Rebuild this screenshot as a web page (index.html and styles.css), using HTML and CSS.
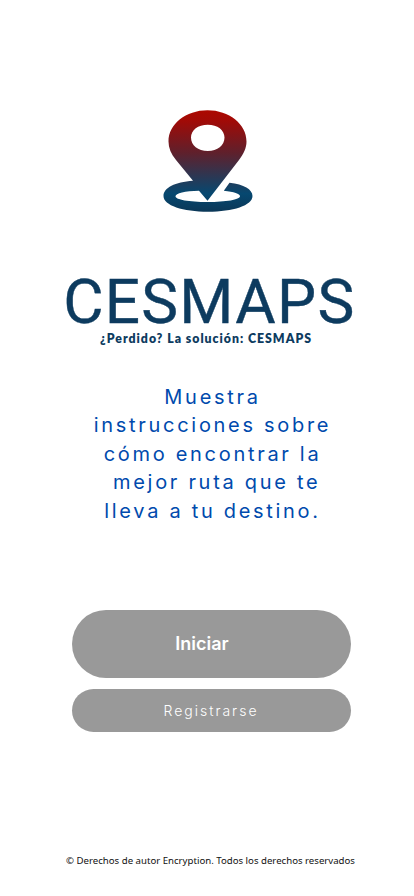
FILE: index.html
```html
<!DOCTYPE html>
<html lang="es">
<head>
<meta charset="utf-8">
<meta name="viewport" content="width=device-width, initial-scale=1">
<title>CESMAPS</title>
<link rel="stylesheet" href="styles.css">
</head>
<body>
<main class="screen">
  <svg class="pin" viewBox="0 0 90 102" aria-hidden="true">
    <defs>
      <linearGradient id="pinFill" gradientUnits="userSpaceOnUse" x1="0" y1="0" x2="0" y2="102">
        <stop offset="0" stop-color="#ac0800"/>
        <stop offset=".1" stop-color="#a20a06"/>
        <stop offset=".42" stop-color="#5f202c"/>
        <stop offset=".82" stop-color="#064870"/>
        <stop offset="1" stop-color="#0b3757"/>
      </linearGradient>
    </defs>
    <path fill="url(#pinFill)" fill-rule="evenodd" d="M44.5 .3C66 .3 83.5 14 83.5 31.5C83.5 38 80.500 44 76 50L44.500 90.700L36 80.700C22 81 12.500 83 12.500 86.500C12.500 89.500 26 92 44.500 92C63 92 77 89.500 77 86.200C77 84 71 81.800 60.800 80.800L66.500 72.800C81 74.500 89.500 79.500 89.500 86C89.500 95.500 70 101.700 45 101.700C20 101.700 .5 95.500 .5 86C.5 78 12 72 30 70.800L13 50C8 44 5.500 38 5.500 31.500C5.500 14 23 .3 44.500 .3ZM44.800 14.700C35 14.700 28 20 28 27.600C28 35.500 35 41 44.800 41C54.500 41 61.500 35.500 61.500 27.600C61.500 20 54.500 14.700 44.800 14.700Z"/>
  </svg>
  <svg class="brand" viewBox="0 0 300 76">
    <text class="brand-name" x="4.200" y="51.500" textLength="291">CESMAPS</text>
    <text class="brand-tag" x="41" y="71.500" textLength="211">¿Perdido? La solución: CESMAPS</text>
  </svg>
  <p class="intro">Muestra
instrucciones sobre
cómo encontrar la
 mejor ruta que te
lleva a tu destino.</p>
  <div class="actions">
    <button class="button start" type="button">Iniciar</button>
    <button class="button register" type="button">Registrarse</button>
  </div>
  <footer class="copyright">© Derechos de autor Encryption. Todos los derechos reservados</footer>
</main>
</body>
</html>
```
FILE: styles.css
```css
* { box-sizing: border-box; }
body { margin: 0; background: #fff; }
.screen {
  width: 414px;
  height: 896px;
  display: flex;
  flex-direction: column;
  align-items: center;
  padding-top: 110px;
  overflow: hidden;
}
.pin { width: 90px; height: 102px; flex: none; margin-left: 1px; }
.brand {
  width: 300px;
  height: 76px;
  flex: none;
  margin: 59px 0 0 4px;
  fill: #0d3b5f;
  overflow: visible;
}
.brand-name {
  font: 400 62px Roboto, sans-serif;
  stroke: #0d3b5f;
  stroke-width: .4px;
}
.brand-tag { font: 800 12.3px Lato, sans-serif; }
.intro {
  width: 260px;
  margin: 36px 0 0 11px;
  font: 400 20px/28.45px Inter, sans-serif;
  letter-spacing: 2.7px;
  color: #004aad;
  text-align: center;
  white-space: pre;
}
.actions {
  display: flex;
  flex-direction: column;
  gap: 11px;
  width: 279px;
  margin: 84.700px 0 0 8px;
}
.button {
  border: 0;
  padding: 0;
  background: #999;
  color: #fff;
  font-family: Inter, sans-serif;
}
.start {
  height: 68.500px;
  border-radius: 34px;
  padding: 0 18px 2px 0;
  font-size: 18px;
  font-weight: 600;
}
.register {
  height: 43px;
  border-radius: 21.5px;
  font-size: 14px;
  font-weight: 300;
  letter-spacing: 2px;
}
.copyright {
  margin: 122px 0 0 7px;
  font: 400 9.65px/14px "Noto Sans", sans-serif;
  color: #111;
  white-space: nowrap;
}
```
